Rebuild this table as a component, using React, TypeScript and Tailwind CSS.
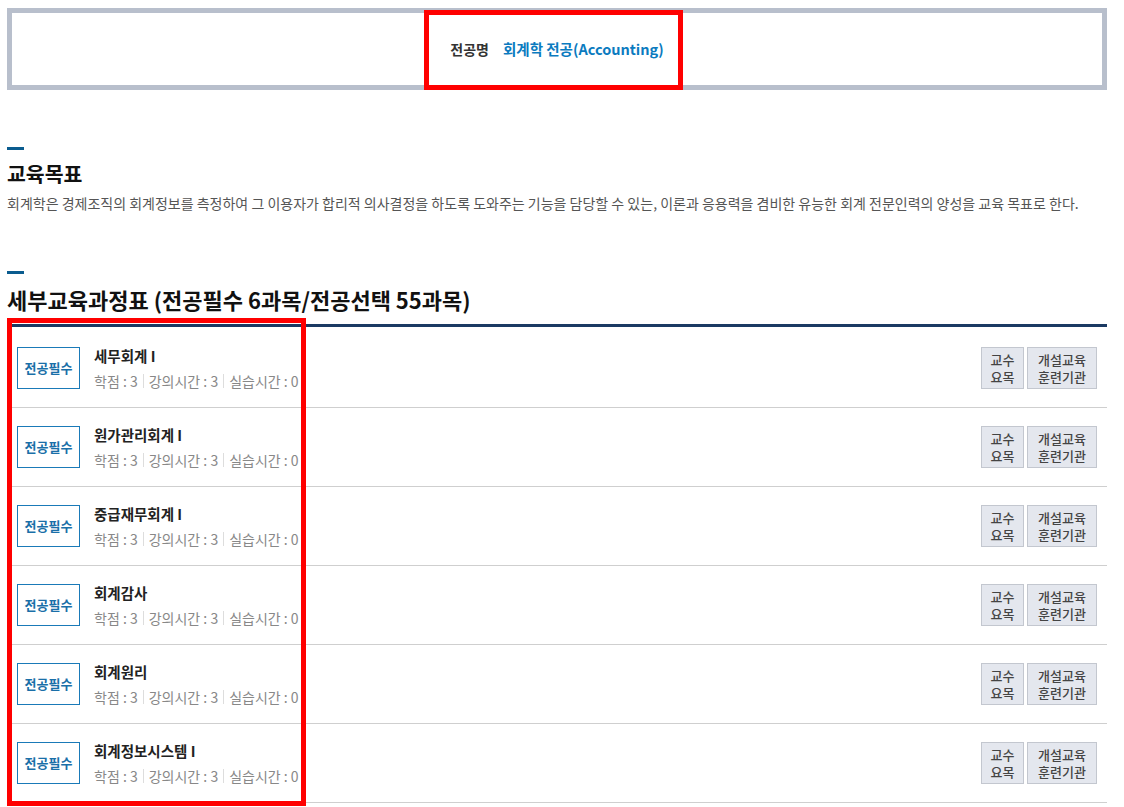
const courses = ['세무회계 I', '원가관리회계 I', '중급재무회계 I', '회계감사', '회계원리', '회계정보시스템 I']

function CourseRow({ name }: { name: string }) {
  return (
    <div className="flex h-[79px] items-center border-b border-[#cfcfcf] pl-[10px] pr-[10px]">
      <div className="flex h-[42px] w-[63px] items-center justify-center border border-[#1a7ab8] text-[13px] font-bold text-[#1a6fa8]">
        전공필수
      </div>
      <div className="ml-[14px] flex flex-col">
        <div className="text-[14.5px] font-bold leading-[20px] text-[#222]">{name}</div>
        <div className="mt-[5px] flex items-center text-[14px] leading-[20px] text-[#888]">
          <span>학점 : 3</span>
          <span className="mx-[5px] h-[14px] w-px bg-[#ddd]"></span>
          <span>강의시간 : 3</span>
          <span className="mx-[5px] h-[14px] w-px bg-[#ddd]"></span>
          <span>실습시간 : 0</span>
        </div>
      </div>
      <div className="ml-auto flex gap-[3px]">
        <button className="flex h-[42px] w-[43px] flex-col items-center justify-center border border-[#c3c7cf] bg-[#e4e7ee] text-[13px] font-medium leading-[17px] text-[#444]">
          <span>교수</span>
          <span>요목</span>
        </button>
        <button className="flex h-[42px] w-[70px] flex-col items-center justify-center border border-[#c3c7cf] bg-[#e4e7ee] text-[13px] font-medium leading-[17px] text-[#444]">
          <span>개설교육</span>
          <span>훈련기관</span>
        </button>
      </div>
    </div>
  )
}

export default function App() {
  return (
    <div
      className="relative min-h-[807px] bg-white"
      style={{ fontFamily: '"Noto Sans CJK KR", "Noto Sans", sans-serif' }}
    >
      <div className="ml-[7px] w-[1100px] pt-[8px]">
        <div className="flex h-[82px] items-center justify-center border-[5px] border-[#b8bfcc] bg-white">
          <span className="text-[14px] font-bold text-[#333]">전공명</span>
          <span className="ml-[14px] text-[14.5px] font-bold text-[#0b7bbf]">회계학 전공(Accounting)</span>
        </div>

        <div className="mt-[57px] h-[3px] w-[17px] bg-[#0a5c8f]"></div>
        <h2 className="mt-[9px] text-[20.5px] font-bold leading-[28px] text-[#111]">교육목표</h2>
        <p className="mt-[6px] text-[14px] leading-[20px] text-[#555]">
          회계학은 경제조직의 회계정보를 측정하여 그 이용자가 합리적 의사결정을 하도록 도와주는 기능을 담당할 수 있는, 이론과 응용력을 겸비한 유능한 회계 전문인력의 양성을 교육 목표로 한다.
        </p>

        <div className="mt-[58px] h-[3px] w-[17px] bg-[#0a5c8f]"></div>
        <h2 className="mt-[10px] text-[22px] font-bold leading-[30px] text-[#111]">
          세부교육과정표 (전공필수 6과목/전공선택 55과목)
        </h2>
        <div className="mt-[10px] border-t-[3px] border-[#1b3a63] pt-[2px]">
          {courses.map((c) => (
            <CourseRow key={c} name={c} />
          ))}
        </div>
      </div>

      <div className="pointer-events-none absolute left-[424px] top-[10px] h-[80px] w-[259px] border-[5px] border-[#ff0000]"></div>
      <div className="pointer-events-none absolute left-[7px] top-[318px] h-[488px] w-[299px] border-[5px] border-[#ff0000]"></div>
    </div>
  )
}
